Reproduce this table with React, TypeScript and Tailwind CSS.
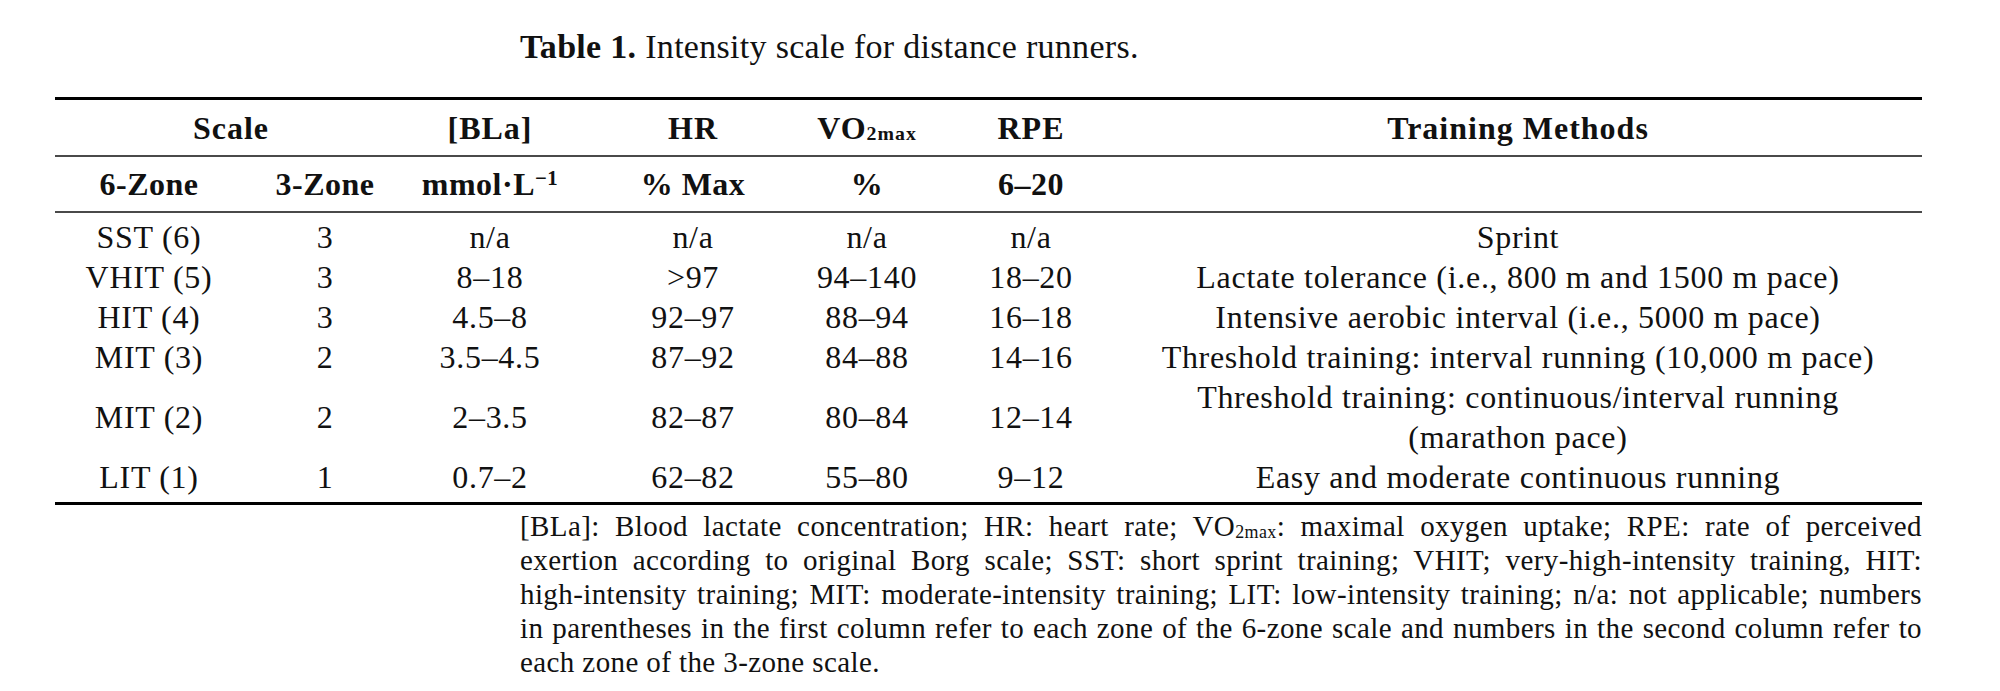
const SERIF = "font-['Liberation_Serif','Times_New_Roman',serif]";

type Row = { six: string; three: string; bla: string; hr: string; vo2: string; rpe: string; method: React.ReactNode };

const ROWS: Row[] = [
  { six: 'SST (6)', three: '3', bla: 'n/a', hr: 'n/a', vo2: 'n/a', rpe: 'n/a', method: 'Sprint' },
  { six: 'VHIT (5)', three: '3', bla: '8–18', hr: '>97', vo2: '94–140', rpe: '18–20', method: 'Lactate tolerance (i.e., 800 m and 1500 m pace)' },
  { six: 'HIT (4)', three: '3', bla: '4.5–8', hr: '92–97', vo2: '88–94', rpe: '16–18', method: 'Intensive aerobic interval (i.e., 5000 m pace)' },
  { six: 'MIT (3)', three: '2', bla: '3.5–4.5', hr: '87–92', vo2: '84–88', rpe: '14–16', method: 'Threshold training: interval running (10,000 m pace)' },
  {
    six: 'MIT (2)',
    three: '2',
    bla: '2–3.5',
    hr: '82–87',
    vo2: '80–84',
    rpe: '12–14',
    method: (
      <>
        Threshold training: continuous/interval running
        <br />
        (marathon pace)
      </>
    ),
  },
  { six: 'LIT (1)', three: '1', bla: '0.7–2', hr: '62–82', vo2: '55–80', rpe: '9–12', method: 'Easy and moderate continuous running' },
];

const COLS = 'grid grid-cols-[188px_164px_166px_240px_108px_220px_754px]';

function Vo2({ small = 'text-[0.62em]' }: { small?: string }) {
  return (
    <span>
      VO<sub className={`${small} relative top-[0.1em]`}>2max</sub>
    </span>
  );
}

const NOTES: React.ReactNode[] = [
  <>
    [BLa]: Blood lactate concentration; HR: heart rate; <Vo2 />: maximal oxygen uptake; RPE: rate of perceived
  </>,
  'exertion according to original Borg scale; SST: short sprint training; VHIT; very-high-intensity training, HIT:',
  'high-intensity training; MIT: moderate-intensity training; LIT: low-intensity training; n/a: not applicable; numbers',
  'in parentheses in the first column refer to each zone of the 6-zone scale and numbers in the second column refer to',
];

export default function App() {
  return (
    <div className={`w-[2000px] h-[691px] bg-white text-[#111] ${SERIF}`}>
      <div className="pl-[520px] pt-[27px] h-[97px] text-[34px] leading-[40px] tracking-[0.3px]">
        <span className="font-bold">Table 1.</span> Intensity scale for distance runners.
      </div>

      <div className="ml-[55px] w-[1867px]">
        <div className="h-[3px] bg-black" />

        <div className={`${COLS} h-[55px] items-center text-[32px] font-bold text-center tracking-[1px]`}>
          <div className="col-span-2">Scale</div>
          <div>[BLa]</div>
          <div>HR</div>
          <div>
            <Vo2 />
          </div>
          <div>RPE</div>
          <div>Training Methods</div>
        </div>
        <div className="h-[2px] bg-[#4a4a4a]" />

        <div className={`${COLS} h-[54px] items-center text-[32px] font-bold text-center tracking-[0.5px]`}>
          <div>6-Zone</div>
          <div>3-Zone</div>
          <div>
            mmol·L<sup className="text-[0.65em]">−1</sup>
          </div>
          <div>% Max</div>
          <div>%</div>
          <div>6–20</div>
          <div />
        </div>
        <div className="h-[2px] bg-[#4a4a4a]" />

        <div className="pt-[4px] pb-[5px] text-[32px] leading-[40px] tracking-[0.7px]">
          {ROWS.map((r) => (
            <div key={r.six} className={`${COLS} items-center text-center whitespace-nowrap`}>
              <div>{r.six}</div>
              <div>{r.three}</div>
              <div>{r.bla}</div>
              <div>{r.hr}</div>
              <div>{r.vo2}</div>
              <div>{r.rpe}</div>
              <div>{r.method}</div>
            </div>
          ))}
        </div>
        <div className="h-[3px] bg-black" />
      </div>

      <div className="ml-[520px] w-[1402px] pt-[4px] text-[29px] leading-[34px] tracking-[0.4px]">
        {NOTES.map((n, i) => (
          <div key={i} className="text-justify [text-align-last:justify]">
            {n}
          </div>
        ))}
        <div>each zone of the 3-zone scale.</div>
      </div>
    </div>
  );
}
